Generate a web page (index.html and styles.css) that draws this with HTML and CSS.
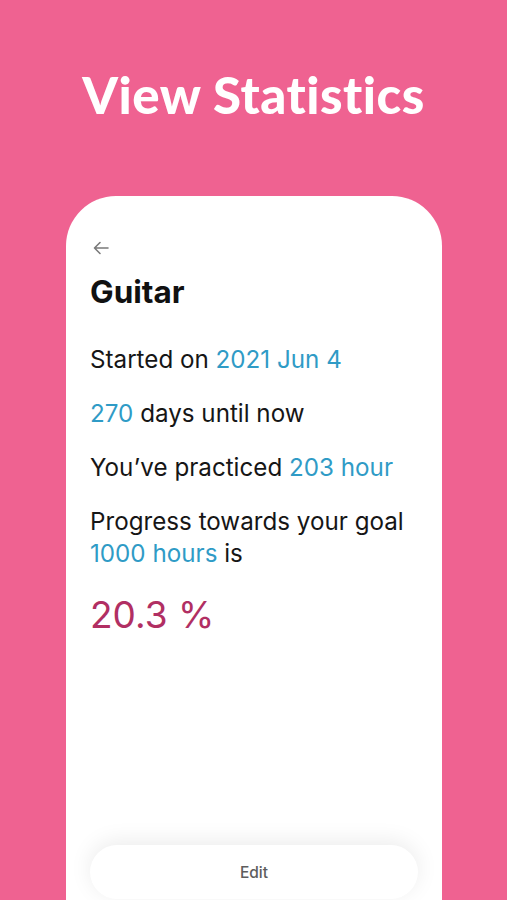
FILE: index.html
```html
<!DOCTYPE html>
<html lang="en">
<head>
    <meta charset="UTF-8">
    <meta name="viewport" content="width=device-width, initial-scale=1.0">
    <title>View Statistics</title>
    <link rel="stylesheet" href="styles.css">
</head>
<body>
    <div class="screen">
        <h1 class="headline">View Statistics</h1>
        <div class="phone">
            <div class="back">
                <svg width="20" height="20" viewBox="0 0 20 20" fill="none" stroke="#7a7a7a" stroke-width="1.6" stroke-linecap="round" stroke-linejoin="round">
                    <path d="M17 10H3.5M9 4.5L3.5 10L9 15.5"/>
                </svg>
            </div>
            <h2 class="title">Guitar</h2>
            <p class="stat">Started on <span class="hl">2021 Jun 4</span></p>
            <p class="stat"><span class="hl">270</span> days until now</p>
            <p class="stat">You’ve practiced <span class="hl">203 hour</span></p>
            <p class="stat">Progress towards your goal<br><span class="hl">1000 hours</span> is</p>
            <p class="percent">20.3 %</p>
            <div class="spacer"></div>
            <div class="actions">
                <button type="button" class="edit-btn">Edit</button>
            </div>
        </div>
    </div>
</body>
</html>
```

FILE: styles.css
```css
/* General Styles */
body {
    margin: 0;
    padding: 0;
    background: #ef6291;
    font-family: Inter, "Noto Sans", sans-serif;
    overflow: hidden;
}

.screen {
    height: 900px;
    display: flex;
    flex-direction: column;
    align-items: center;
}

.headline {
    margin: 65px 0 0;
    color: #ffffff;
    font-family: Lato, sans-serif;
    font-weight: 900;
    font-size: 51px;
    letter-spacing: 0.5px;
    line-height: 60px;
}

.phone {
    margin-top: 71px;
    margin-left: 1px;
    width: 376px;
    flex: 1;
    background: #ffffff;
    border-radius: 50px 50px 0 0;
    padding: 42px 24px 0;
    box-sizing: border-box;
    display: flex;
    flex-direction: column;
}

.back {
    height: 20px;
    margin-left: 1px;
}

.title {
    margin: 16px 0 0;
    font-size: 31.5px;
    font-weight: 700;
    color: #111111;
    line-height: 36px;
}

.stat {
    margin: 34px 0 0;
    font-size: 24.2px;
    line-height: 32px;
    color: #161616;
}

.stat + .stat {
    margin-top: 22px;
}

.hl {
    color: #2f9bc6;
}

.percent {
    margin: 21px 0 0;
    font-size: 37px;
    line-height: 48px;
    color: #b12f63;
}

.spacer {
    flex: 1;
}

.actions {
    margin-bottom: 1px;
}

.edit-btn {
    width: 328px;
    height: 54px;
    border: none;
    border-radius: 27px;
    background: #ffffff;
    box-shadow: 0 -4px 22px rgba(0, 0, 0, 0.08);
    font-family: Inter, sans-serif;
    font-size: 15.5px;
    font-weight: 500;
    color: #5e5e5e;
    cursor: pointer;
}
```
